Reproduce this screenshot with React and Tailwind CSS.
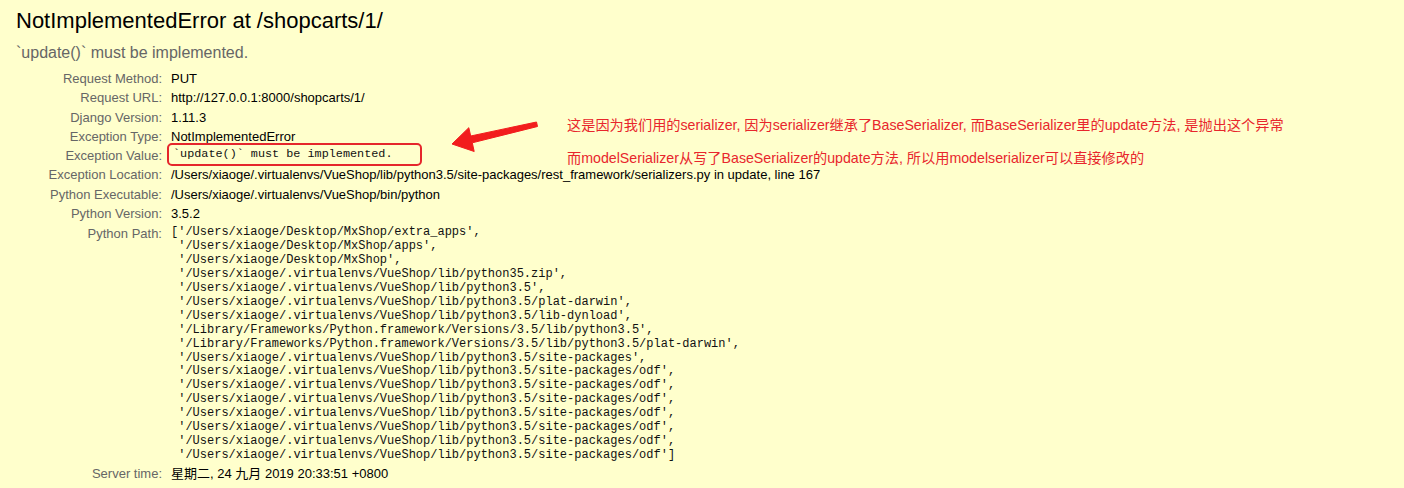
import React from "react";

const rows = [
  ["Request Method:", "PUT"],
  ["Request URL:", "http://127.0.0.1:8000/shopcarts/1/"],
  ["Django Version:", "1.11.3"],
  ["Exception Type:", "NotImplementedError"],
  ["Exception Value:", "__EXC__"],
  [
    "Exception Location:",
    "/Users/xiaoge/.virtualenvs/VueShop/lib/python3.5/site-packages/rest_framework/serializers.py in update, line 167",
  ],
  ["Python Executable:", "/Users/xiaoge/.virtualenvs/VueShop/bin/python"],
  ["Python Version:", "3.5.2"],
];

const paths = [
  "['/Users/xiaoge/Desktop/MxShop/extra_apps',",
  " '/Users/xiaoge/Desktop/MxShop/apps',",
  " '/Users/xiaoge/Desktop/MxShop',",
  " '/Users/xiaoge/.virtualenvs/VueShop/lib/python35.zip',",
  " '/Users/xiaoge/.virtualenvs/VueShop/lib/python3.5',",
  " '/Users/xiaoge/.virtualenvs/VueShop/lib/python3.5/plat-darwin',",
  " '/Users/xiaoge/.virtualenvs/VueShop/lib/python3.5/lib-dynload',",
  " '/Library/Frameworks/Python.framework/Versions/3.5/lib/python3.5',",
  " '/Library/Frameworks/Python.framework/Versions/3.5/lib/python3.5/plat-darwin',",
  " '/Users/xiaoge/.virtualenvs/VueShop/lib/python3.5/site-packages',",
  " '/Users/xiaoge/.virtualenvs/VueShop/lib/python3.5/site-packages/odf',",
  " '/Users/xiaoge/.virtualenvs/VueShop/lib/python3.5/site-packages/odf',",
  " '/Users/xiaoge/.virtualenvs/VueShop/lib/python3.5/site-packages/odf',",
  " '/Users/xiaoge/.virtualenvs/VueShop/lib/python3.5/site-packages/odf',",
  " '/Users/xiaoge/.virtualenvs/VueShop/lib/python3.5/site-packages/odf',",
  " '/Users/xiaoge/.virtualenvs/VueShop/lib/python3.5/site-packages/odf',",
  " '/Users/xiaoge/.virtualenvs/VueShop/lib/python3.5/site-packages/odf']",
];

const sans = "font-['Liberation_Sans','Noto_Sans_CJK_SC',sans-serif]";
const mono = "font-['Liberation_Mono','Noto_Sans_CJK_SC',monospace]";

export default function App() {
  return (
    <div
      className={`relative w-full h-[488px] overflow-hidden bg-[#ffffcc] text-black ${sans}`}
    >
      <div className="px-4 pt-[8px]">
        <h1 className="text-[22px] leading-[26px] font-normal">
          NotImplementedError at /shopcarts/1/
        </h1>
        <div className="mt-[9px] text-[16px] leading-[20px] text-[#666666]">
          `update()` must be implemented.
        </div>
      </div>

      <div className="mt-[6px] grid grid-cols-[162px_1fr] gap-x-[9px] text-[13px] leading-[19.3px]">
        {rows.map(([label, value]) => (
          <React.Fragment key={label}>
            <div className="text-right text-[#666666] h-[19.3px]">{label}</div>
            {value === "__EXC__" ? (
              <div
                className={`${mono} h-[19.3px] pl-[2px] text-[11.8px] leading-[17px] whitespace-nowrap text-[#111]`}
              >
                `update()` must be implemented.
              </div>
            ) : (
              <div className="h-[19.3px] whitespace-nowrap">{value}</div>
            )}
          </React.Fragment>
        ))}
        <div className="text-right text-[#666666] pt-[1px]">Python Path:</div>
        <div
          className={`${mono} pt-[3px] pb-[1px] text-[12px] leading-[13.9px] whitespace-pre text-[#111]`}
        >
          {paths.map((p, i) => (
            <div key={i}>{p}</div>
          ))}
        </div>
        <div className="text-right text-[#666666] h-[19px]">Server time:</div>
        <div className="h-[19px]">星期二, 24 九月 2019 20:33:51 +0800</div>
      </div>

      {/* annotation box */}
      <div className="absolute left-[167px] top-[143px] w-[255px] h-[23px] border-2 border-[#e5262c] rounded-[5px]" />

      {/* arrow */}
      <svg
        className="absolute left-0 top-0"
        width="600"
        height="200"
        viewBox="0 0 600 200"
      >
        <polygon
          points="452,144 468.8,127.7 470.7,136 536.5,122 537.5,126.5 472.3,142.8 474.2,151.5"
          fill="#f21d1d"
          stroke="#f21d1d"
          strokeWidth="1"
          strokeLinejoin="round"
        />
      </svg>

      {/* annotation text */}
      <div className="absolute left-[567px] top-[116px] text-[14.2px] leading-[18px] text-[#e8262c] whitespace-nowrap">
        <div>
          这是因为我们用的serializer, 因为serializer继承了BaseSerializer, 而BaseSerializer里的update方法, 是抛出这个异常
        </div>
        <div className="mt-[15px]">
          而modelSerializer从写了BaseSerializer的update方法, 所以用modelserializer可以直接修改的
        </div>
      </div>
    </div>
  );
}
